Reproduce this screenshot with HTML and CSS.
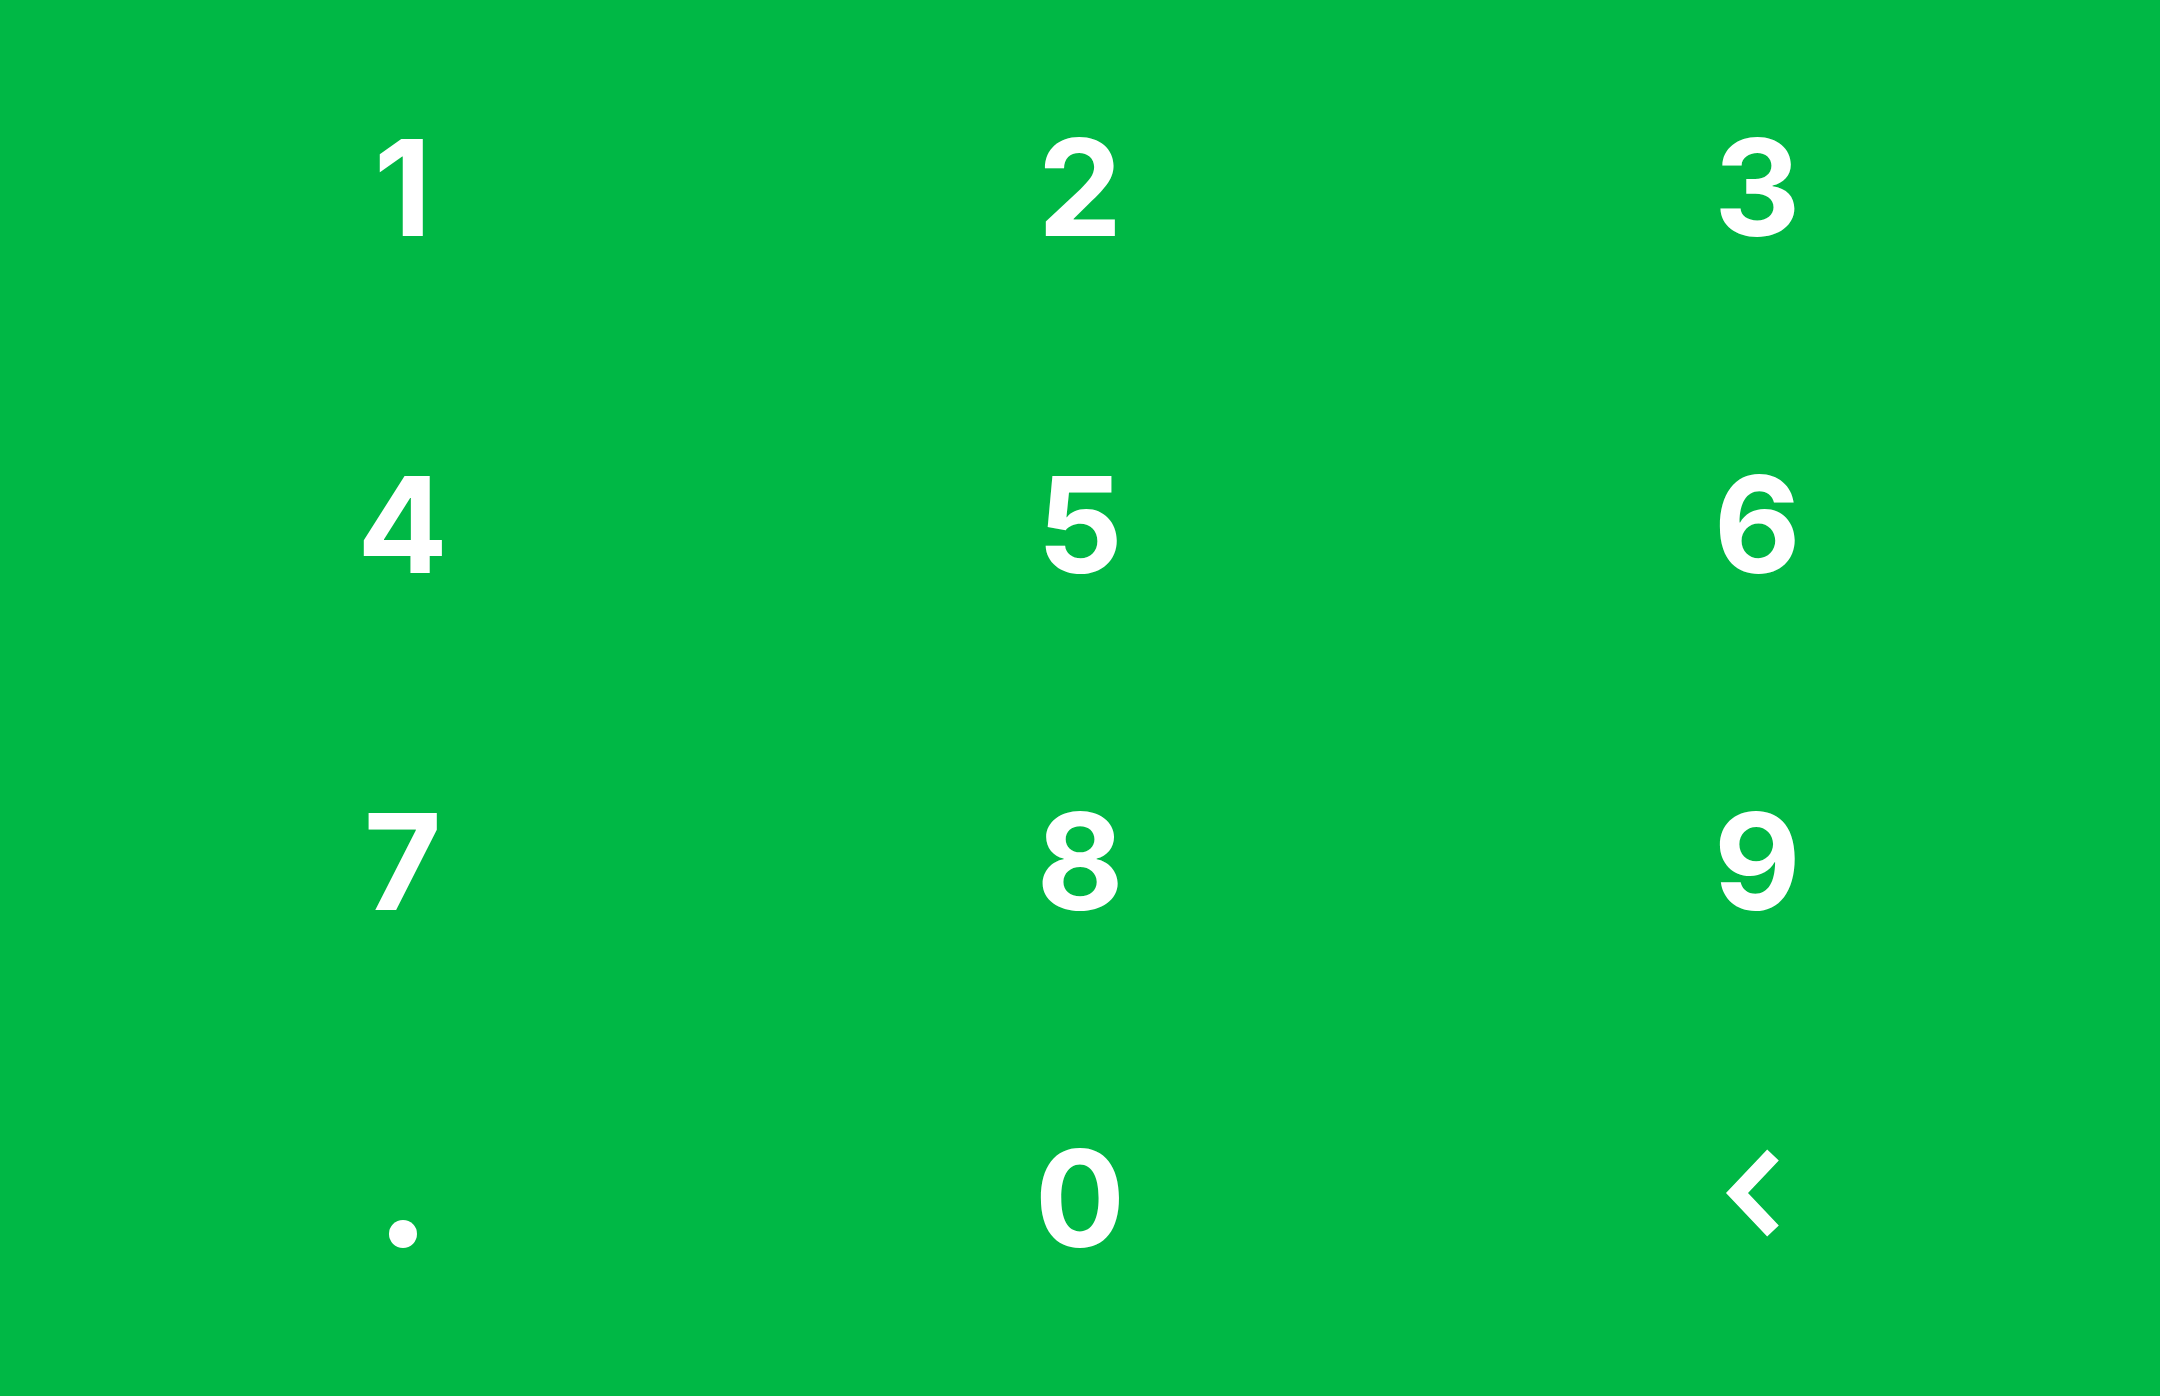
FILE: index.html
```html
<!DOCTYPE html>
<html lang="en">
<head>
<meta charset="utf-8">
<title>Keypad</title>
<link rel="stylesheet" href="styles.css">
</head>
<body>
<div class="keypad">
  <button class="key">1</button>
  <button class="key">2</button>
  <button class="key">3</button>
  <button class="key">4</button>
  <button class="key">5</button>
  <button class="key">6</button>
  <button class="key">7</button>
  <button class="key">8</button>
  <button class="key">9</button>
  <button class="key" aria-label="decimal point"><span class="dot"></span></button>
  <button class="key">0</button>
  <button class="key" aria-label="backspace">
    <svg class="back" width="80" height="100" viewBox="0 0 80 100">
      <polyline points="56,7 20,45 56,83" fill="none" stroke="#ffffff" stroke-width="16" stroke-linecap="butt" stroke-linejoin="miter"/>
    </svg>
  </button>
</div>
</body>
</html>
```

FILE: styles.css
```css
html, body {
  margin: 0;
  padding: 0;
  background: #00b845;
}

.keypad {
  box-sizing: border-box;
  width: 2160px;
  height: 1396px;
  padding: 18px 64px 30px;
  display: grid;
  grid-template-columns: repeat(3, 1fr);
  grid-template-rows: repeat(4, 337px);
  background: #00b845;
}

.key {
  display: flex;
  align-items: center;
  justify-content: center;
  border: 0;
  padding: 0;
  margin: 0;
  background: transparent;
  color: #ffffff;
  font-family: Inter, "Noto Sans", sans-serif;
  font-weight: 700;
  font-size: 134px;
  line-height: 1;
}

.dot {
  display: block;
  width: 28px;
  height: 28px;
  border-radius: 50%;
  background: #ffffff;
  margin-top: 72px;
}

.back {
  display: block;
}
```
